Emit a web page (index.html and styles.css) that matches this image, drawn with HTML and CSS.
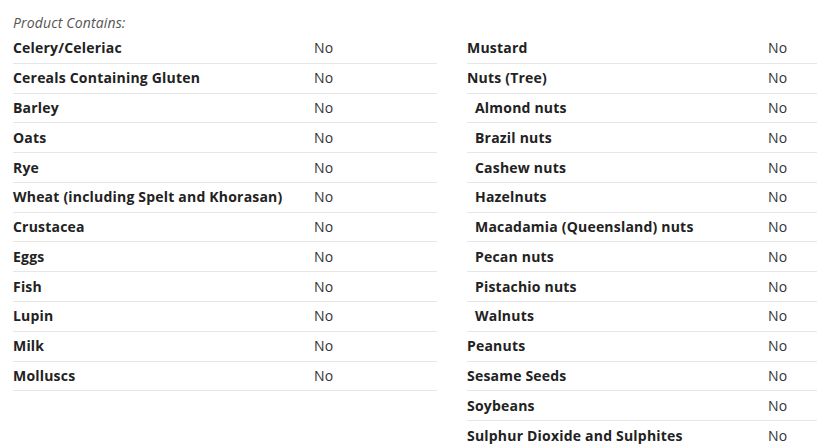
FILE: index.html
```html
<!DOCTYPE html>
<html>
<head>
<meta charset="utf-8">
<link rel="stylesheet" href="styles.css">
</head>
<body>
<div class="page">
  <div class="heading">Product Contains:</div>
  <div class="cols">
    <div class="col col-left">
      <div class="row"><span class="label">Celery/Celeriac</span><span class="val">No</span></div>
      <div class="row"><span class="label">Cereals Containing Gluten</span><span class="val">No</span></div>
      <div class="row"><span class="label">Barley</span><span class="val">No</span></div>
      <div class="row"><span class="label">Oats</span><span class="val">No</span></div>
      <div class="row"><span class="label">Rye</span><span class="val">No</span></div>
      <div class="row"><span class="label">Wheat (including Spelt and Khorasan)</span><span class="val">No</span></div>
      <div class="row"><span class="label">Crustacea</span><span class="val">No</span></div>
      <div class="row"><span class="label">Eggs</span><span class="val">No</span></div>
      <div class="row"><span class="label">Fish</span><span class="val">No</span></div>
      <div class="row"><span class="label">Lupin</span><span class="val">No</span></div>
      <div class="row"><span class="label">Milk</span><span class="val">No</span></div>
      <div class="row"><span class="label">Molluscs</span><span class="val">No</span></div>
    </div>
    <div class="col col-right">
      <div class="row"><span class="label">Mustard</span><span class="val">No</span></div>
      <div class="row"><span class="label">Nuts (Tree)</span><span class="val">No</span></div>
      <div class="row"><span class="label sub">Almond nuts</span><span class="val">No</span></div>
      <div class="row"><span class="label sub">Brazil nuts</span><span class="val">No</span></div>
      <div class="row"><span class="label sub">Cashew nuts</span><span class="val">No</span></div>
      <div class="row"><span class="label sub">Hazelnuts</span><span class="val">No</span></div>
      <div class="row"><span class="label sub">Macadamia (Queensland) nuts</span><span class="val">No</span></div>
      <div class="row"><span class="label sub">Pecan nuts</span><span class="val">No</span></div>
      <div class="row"><span class="label sub">Pistachio nuts</span><span class="val">No</span></div>
      <div class="row"><span class="label sub">Walnuts</span><span class="val">No</span></div>
      <div class="row"><span class="label">Peanuts</span><span class="val">No</span></div>
      <div class="row"><span class="label">Sesame Seeds</span><span class="val">No</span></div>
      <div class="row"><span class="label">Soybeans</span><span class="val">No</span></div>
      <div class="row"><span class="label">Sulphur Dioxide and Sulphites</span><span class="val">No</span></div>
    </div>
  </div>
</div>
</body>
</html>
```

FILE: styles.css
```css
html, body {
  margin: 0;
  padding: 0;
  background: #fff;
  overflow: hidden;
}
body {
  font-family: "Open Sans", "Liberation Sans", sans-serif;
  font-size: 14px;
  color: #333;
}
.page {
  box-sizing: border-box;
  width: 817px;
  padding: 13px 0 0 13px;
}
.heading {
  font-style: italic;
  color: #555;
  line-height: 20px;
  height: 21px;
  letter-spacing: 0.15px;
}
.cols {
  display: flex;
  gap: 30px;
  align-items: flex-start;
}
.col-left {
  width: 424px;
  flex: none;
}
.col-right {
  flex: 1;
  min-width: 0;
}
.row {
  display: grid;
  grid-template-columns: 301px 1fr;
  line-height: 20px;
  padding: 4.4px 0;
  border-bottom: 1px solid #e6e6e6;
  white-space: nowrap;
}
.label {
  font-weight: 700;
  color: #222;
  letter-spacing: 0.2px;
}
.label.sub {
  padding-left: 8px;
}
.val {
  color: #333;
  letter-spacing: 0.2px;
}
```
